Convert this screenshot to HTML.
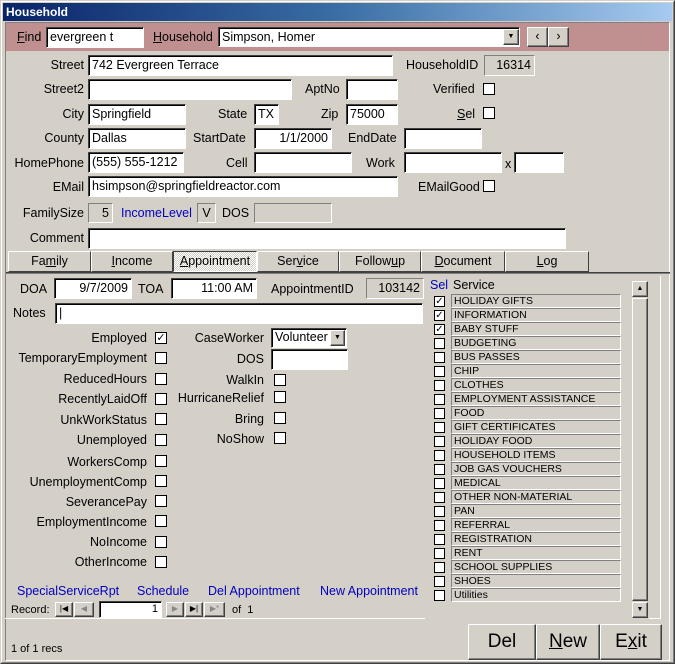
<!DOCTYPE html>
<html><head><meta charset="utf-8"><style>
*{box-sizing:border-box;margin:0;padding:0}
body{width:675px;height:664px;background:#d4d0c8;font-family:"Liberation Sans",sans-serif;font-size:12.5px;color:#000;position:relative;overflow:hidden}
div,span{position:absolute}
.t{white-space:nowrap;line-height:14px}
.r{text-align:right}
.tb{background:#fff;border:1px solid;border-color:#404040 #fff #fff #404040;box-shadow:inset 1px 1px 0 #000;padding:2px 0 0 3px;white-space:nowrap;line-height:15px}
.g{background:#d4d0c8;border:1px solid;border-color:#808080 #fff #fff #808080;padding:2px 3px 0 0;text-align:right;line-height:15px}
.cb{width:12px;height:12px;border:1px solid #000;background:#fff;font-size:11px;line-height:10px;text-align:center}
.btn{background:#d4d0c8;border:1px solid;border-color:#fff #404040 #404040 #fff;box-shadow:inset -1px -1px 0 #808080;text-align:center}
.tab{top:251px;height:21px;background:#d4d0c8;border:1px solid;border-color:#fff #404040 #404040 #fff;text-align:center;line-height:19px}
.blue{color:#0000c0}
.it{left:451px;width:170px;height:14px;border:1px solid;border-color:#808080 #fff #fff #808080;background:#d4d0c8;font-size:10.5px;line-height:12px;padding-left:2px;white-space:nowrap}
.sc{left:434px;width:11px;height:11px;border:1px solid #000;background:#fff;font-size:10px;line-height:9px;text-align:center}
</style></head><body>
<!-- window frame -->
<div style="left:0;top:0;width:675px;height:664px;border:1px solid;border-color:#d4d0c8 #404040 #404040 #d4d0c8"></div>
<div style="left:1px;top:1px;width:673px;height:662px;border:1px solid;border-color:#fff #808080 #808080 #fff"></div>
<div style="left:3px;top:3px;width:669px;height:18px;background:linear-gradient(90deg,#0a246a,#3a6ea5 50%,#a6caf0);"></div>
<div class="t" style="left:6px;top:5px;color:#fff;font-weight:bold;font-size:12px">Household</div>
<div style="left:5px;top:22px;width:665px;height:639px;border:1px solid;border-color:#808080 #fff #fff #808080"></div>
<!-- pink band -->
<div style="left:6px;top:23px;width:663px;height:28px;background:#c09090"></div>
<div class="t" style="left:17px;top:30px"><u>F</u>ind</div>
<div class="tb" style="left:46px;top:27px;width:98px;height:21px">evergreen t</div>
<div class="t" style="left:153px;top:30px"><u>H</u>ousehold</div>
<div class="tb" style="left:218px;top:27px;width:302px;height:20px">Simpson, Homer</div>
<div class="btn" style="left:503px;top:29px;width:16px;height:16px;font-size:7px;line-height:14px">▼</div>
<div class="btn" style="left:527px;top:27px;width:21px;height:20px;line-height:17px">‹</div>
<div class="btn" style="left:548px;top:27px;width:21px;height:20px;line-height:17px">›</div>
<!-- header fields -->
<div class="t r" style="left:10px;width:74px;top:58px">Street</div>
<div class="tb" style="left:88px;top:55px;width:305px;height:21px">742 Evergreen Terrace</div>
<div class="t" style="left:406px;top:58px">HouseholdID</div>
<div class="g" style="left:484px;top:55px;width:51px;height:21px">16314</div>
<div class="t r" style="left:10px;width:74px;top:82px">Street2</div>
<div class="tb" style="left:88px;top:79px;width:204px;height:21px"></div>
<div class="t" style="left:305px;top:82px">AptNo</div>
<div class="tb" style="left:346px;top:79px;width:52px;height:21px"></div>
<div class="t" style="left:433px;top:82px">Verified</div>
<div class="cb" style="left:483px;top:83px"></div>
<div class="t r" style="left:10px;width:74px;top:107px">City</div>
<div class="tb" style="left:88px;top:104px;width:98px;height:21px">Springfield</div>
<div class="t" style="left:218px;top:107px">State</div>
<div class="tb" style="left:254px;top:104px;width:25px;height:21px">TX</div>
<div class="t" style="left:321px;top:107px">Zip</div>
<div class="tb" style="left:346px;top:104px;width:52px;height:21px">75000</div>
<div class="t" style="left:457px;top:107px"><u>S</u>el</div>
<div class="cb" style="left:483px;top:107px"></div>
<div class="t r" style="left:10px;width:74px;top:131px">County</div>
<div class="tb" style="left:88px;top:128px;width:98px;height:21px">Dallas</div>
<div class="t" style="left:193px;top:131px">StartDate</div>
<div class="tb" style="left:254px;top:128px;width:78px;height:21px;text-align:right;padding-right:3px">1/1/2000</div>
<div class="t" style="left:348px;top:131px">EndDate</div>
<div class="tb" style="left:404px;top:128px;width:78px;height:21px"></div>
<div class="t r" style="left:5px;width:79px;top:156px">HomePhone</div>
<div class="tb" style="left:88px;top:152px;width:96px;height:21px">(555) 555-1212</div>
<div class="t" style="left:226px;top:156px">Cell</div>
<div class="tb" style="left:254px;top:152px;width:98px;height:21px"></div>
<div class="t" style="left:366px;top:156px">Work</div>
<div class="tb" style="left:404px;top:152px;width:98px;height:21px"></div>
<div class="t" style="left:505px;top:157px">x</div>
<div class="tb" style="left:514px;top:152px;width:50px;height:21px"></div>
<div class="t r" style="left:10px;width:74px;top:180px">EMail</div>
<div class="tb" style="left:88px;top:176px;width:310px;height:21px">hsimpson@springfieldreactor.com</div>
<div class="t" style="left:418px;top:180px">EMailGood</div>
<div class="cb" style="left:483px;top:180px"></div>
<div class="t r" style="left:5px;width:79px;top:206px">FamilySize</div>
<div class="g" style="left:88px;top:203px;width:25px;height:20px">5</div>
<div class="t blue" style="left:121px;top:206px">IncomeLevel</div>
<div class="g" style="left:197px;top:203px;width:19px;height:20px;text-align:center;padding:2px 0 0">V</div>
<div class="t" style="left:222px;top:206px">DOS</div>
<div class="g" style="left:254px;top:203px;width:78px;height:20px"></div>
<div class="t r" style="left:5px;width:79px;top:231px">Comment</div>
<div class="tb" style="left:88px;top:228px;width:478px;height:21px"></div>
<!-- tabs -->
<div class="tab" style="left:8px;width:83px">Fa<u>m</u>ily</div>
<div class="tab" style="left:91px;width:82px"><u>I</u>ncome</div>
<div class="tab" style="left:173px;width:84px;border-color:#404040 #fff #fff #404040;background:repeating-conic-gradient(#d4d0c8 0 25%,#fff 0 50%) 0 0/2px 2px"><u>A</u>ppointment</div>
<div class="tab" style="left:257px;width:82px">Ser<u>v</u>ice</div>
<div class="tab" style="left:339px;width:82px">Follow<u>u</u>p</div>
<div class="tab" style="left:421px;width:84px"><u>D</u>ocument</div>
<div class="tab" style="left:505px;width:84px"><u>L</u>og</div>
<div style="left:6px;top:272px;width:664px;height:2px;border-top:1px solid #404040;border-bottom:1px solid #808080"></div>
<!-- appointment page -->
<div class="t" style="left:20px;top:282px">DOA</div>
<div class="tb" style="left:54px;top:278px;width:78px;height:21px;text-align:right;padding-right:3px">9/7/2009</div>
<div class="t" style="left:138px;top:282px">TOA</div>
<div class="tb" style="left:171px;top:278px;width:86px;height:21px;text-align:right;padding-right:3px">11:00 AM</div>
<div class="t" style="left:271px;top:282px">AppointmentID</div>
<div class="g" style="left:366px;top:278px;width:58px;height:21px">103142</div>
<div class="t" style="left:13px;top:306px">Notes</div>
<div class="tb" style="left:55px;top:303px;width:368px;height:21px">|</div>

<div class="t r" style="left:5px;width:142px;top:331px">Employed</div><div class="cb" style="left:155px;top:332px">✓</div>
<div class="t r" style="left:5px;width:142px;top:351px">TemporaryEmployment</div><div class="cb" style="left:155px;top:352px"></div>
<div class="t r" style="left:5px;width:142px;top:372px">ReducedHours</div><div class="cb" style="left:155px;top:373px"></div>
<div class="t r" style="left:5px;width:142px;top:392px">RecentlyLaidOff</div><div class="cb" style="left:155px;top:393px"></div>
<div class="t r" style="left:5px;width:142px;top:413px">UnkWorkStatus</div><div class="cb" style="left:155px;top:413px"></div>
<div class="t r" style="left:5px;width:142px;top:433px">Unemployed</div><div class="cb" style="left:155px;top:434px"></div>
<div class="t r" style="left:5px;width:142px;top:455px">WorkersComp</div><div class="cb" style="left:155px;top:455px"></div>
<div class="t r" style="left:5px;width:142px;top:475px">UnemploymentComp</div><div class="cb" style="left:155px;top:475px"></div>
<div class="t r" style="left:5px;width:142px;top:495px">SeverancePay</div><div class="cb" style="left:155px;top:495px"></div>
<div class="t r" style="left:5px;width:142px;top:515px">EmploymentIncome</div><div class="cb" style="left:155px;top:515px"></div>
<div class="t r" style="left:5px;width:142px;top:535px">NoIncome</div><div class="cb" style="left:155px;top:536px"></div>
<div class="t r" style="left:5px;width:142px;top:555px">OtherIncome</div><div class="cb" style="left:155px;top:556px"></div>

<div class="t r" style="left:170px;width:94px;top:331px">CaseWorker</div>
<div class="tb" style="left:271px;top:328px;width:76px;height:20px;padding-top:1px">Volunteer</div>
<div class="btn" style="left:330px;top:330px;width:15px;height:16px;font-size:7px;line-height:14px">▼</div>
<div class="t r" style="left:170px;width:94px;top:352px">DOS</div>
<div class="tb" style="left:271px;top:349px;width:77px;height:21px"></div>
<div class="t r" style="left:170px;width:94px;top:373px">WalkIn</div><div class="cb" style="left:274px;top:374px"></div>
<div class="t r" style="left:170px;width:94px;top:391px">HurricaneRelief</div><div class="cb" style="left:274px;top:391px"></div>
<div class="t r" style="left:170px;width:94px;top:412px">Bring</div><div class="cb" style="left:274px;top:412px"></div>
<div class="t r" style="left:170px;width:94px;top:432px">NoShow</div><div class="cb" style="left:274px;top:432px"></div>

<!-- links -->
<div class="t blue" style="left:17px;top:584px">SpecialServiceRpt</div>
<div class="t blue" style="left:137px;top:584px">Schedule</div>
<div class="t blue" style="left:208px;top:584px">Del Appointment</div>
<div class="t blue" style="left:320px;top:584px">New Appointment</div>
<!-- record nav -->
<div class="t" style="left:11px;top:603px;font-size:11px">Record:</div>
<div class="btn" style="left:55px;top:602px;width:18px;height:15px;font-size:8px;line-height:12px">|◀</div>
<div class="btn" style="left:74px;top:602px;width:20px;height:15px;font-size:8px;line-height:12px;color:#888">◀</div>
<div class="tb" style="left:99px;top:601px;width:63px;height:17px;text-align:right;padding:1px 3px 0 0;font-size:11px;line-height:13px">1</div>
<div class="btn" style="left:166px;top:602px;width:18px;height:15px;font-size:8px;line-height:12px;color:#888">▶</div>
<div class="btn" style="left:185px;top:602px;width:18px;height:15px;font-size:8px;line-height:12px">▶|</div>
<div class="btn" style="left:204px;top:602px;width:21px;height:15px;font-size:8px;line-height:12px;color:#888">▶*</div>
<div class="t" style="left:232px;top:603px;font-size:11px">of &nbsp;1</div>
<div style="left:5px;top:618px;width:420px;height:1px;background:#fff"></div>

<!-- service subform -->
<div class="t blue" style="left:430px;top:278px">Sel</div>
<div class="t" style="left:453px;top:278px">Service</div>
<div class="sc" style="top:296px">✓</div><div class="it" style="top:294px">HOLIDAY GIFTS</div>
<div class="sc" style="top:310px">✓</div><div class="it" style="top:308px">INFORMATION</div>
<div class="sc" style="top:324px">✓</div><div class="it" style="top:322px">BABY STUFF</div>
<div class="sc" style="top:338px"></div><div class="it" style="top:336px">BUDGETING</div>
<div class="sc" style="top:352px"></div><div class="it" style="top:350px">BUS PASSES</div>
<div class="sc" style="top:366px"></div><div class="it" style="top:364px">CHIP</div>
<div class="sc" style="top:380px"></div><div class="it" style="top:378px">CLOTHES</div>
<div class="sc" style="top:394px"></div><div class="it" style="top:392px">EMPLOYMENT ASSISTANCE</div>
<div class="sc" style="top:408px"></div><div class="it" style="top:406px">FOOD</div>
<div class="sc" style="top:422px"></div><div class="it" style="top:420px">GIFT CERTIFICATES</div>
<div class="sc" style="top:436px"></div><div class="it" style="top:434px">HOLIDAY FOOD</div>
<div class="sc" style="top:450px"></div><div class="it" style="top:448px">HOUSEHOLD ITEMS</div>
<div class="sc" style="top:464px"></div><div class="it" style="top:462px">JOB GAS VOUCHERS</div>
<div class="sc" style="top:478px"></div><div class="it" style="top:476px">MEDICAL</div>
<div class="sc" style="top:492px"></div><div class="it" style="top:490px">OTHER NON-MATERIAL</div>
<div class="sc" style="top:506px"></div><div class="it" style="top:504px">PAN</div>
<div class="sc" style="top:520px"></div><div class="it" style="top:518px">REFERRAL</div>
<div class="sc" style="top:534px"></div><div class="it" style="top:532px">REGISTRATION</div>
<div class="sc" style="top:548px"></div><div class="it" style="top:546px">RENT</div>
<div class="sc" style="top:562px"></div><div class="it" style="top:560px">SCHOOL SUPPLIES</div>
<div class="sc" style="top:576px"></div><div class="it" style="top:574px">SHOES</div>
<div class="sc" style="top:590px"></div><div class="it" style="top:588px">Utilities</div>
<!-- scrollbar -->
<div class="btn" style="left:632px;top:281px;width:16px;height:16px;font-size:7px;line-height:14px">▲</div>
<div class="btn" style="left:632px;top:298px;width:16px;height:303px"></div>
<div class="btn" style="left:632px;top:602px;width:16px;height:16px;font-size:7px;line-height:14px">▼</div>
<div style="left:660px;top:276px;width:1px;height:343px;background:#fff"></div>
<div style="left:649px;top:618px;width:12px;height:1px;background:#fff"></div>

<!-- bottom buttons -->
<div class="btn" style="left:468px;top:624px;width:68px;height:36px;font-size:19px;line-height:33px">Del</div>
<div class="btn" style="left:536px;top:624px;width:64px;height:36px;font-size:19px;line-height:33px"><u>N</u>ew</div>
<div class="btn" style="left:600px;top:624px;width:62px;height:36px;font-size:19px;line-height:33px">E<u>x</u>it</div>
<div class="t" style="left:11px;top:642px;font-size:11px">1 of 1 recs</div>
</body></html>
